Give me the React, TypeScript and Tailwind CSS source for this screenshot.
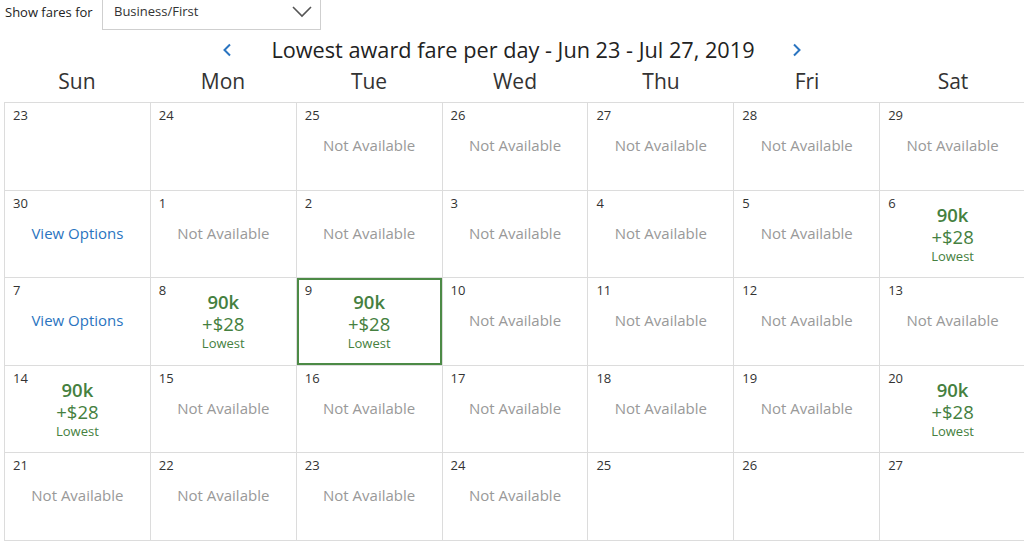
import React from "react";

type Cell = { d: number; kind: "empty" | "na" | "view" | "fare"; sel?: boolean };

const rows: Cell[][] = [
  [
    { d: 23, kind: "empty" },
    { d: 24, kind: "empty" },
    { d: 25, kind: "na" },
    { d: 26, kind: "na" },
    { d: 27, kind: "na" },
    { d: 28, kind: "na" },
    { d: 29, kind: "na" },
  ],
  [
    { d: 30, kind: "view" },
    { d: 1, kind: "na" },
    { d: 2, kind: "na" },
    { d: 3, kind: "na" },
    { d: 4, kind: "na" },
    { d: 5, kind: "na" },
    { d: 6, kind: "fare" },
  ],
  [
    { d: 7, kind: "view" },
    { d: 8, kind: "fare" },
    { d: 9, kind: "fare", sel: true },
    { d: 10, kind: "na" },
    { d: 11, kind: "na" },
    { d: 12, kind: "na" },
    { d: 13, kind: "na" },
  ],
  [
    { d: 14, kind: "fare" },
    { d: 15, kind: "na" },
    { d: 16, kind: "na" },
    { d: 17, kind: "na" },
    { d: 18, kind: "na" },
    { d: 19, kind: "na" },
    { d: 20, kind: "fare" },
  ],
  [
    { d: 21, kind: "na" },
    { d: 22, kind: "na" },
    { d: 23, kind: "na" },
    { d: 24, kind: "na" },
    { d: 25, kind: "empty" },
    { d: 26, kind: "empty" },
    { d: 27, kind: "empty" },
  ],
];

const days = ["Sun", "Mon", "Tue", "Wed", "Thu", "Fri", "Sat"];

function CellView({ c }: { c: Cell }) {
  return (
    <div className="relative h-[87.5px] border-r border-b border-[#dcdcdc] bg-white">
      {c.sel && <div className="absolute inset-0 border-2 border-[#4c8a46] pointer-events-none" />}
      <div className="absolute left-[8px] top-[3px] text-[13px] text-[#333]">{c.d}</div>
      {c.kind === "na" && (
        <div className="pt-[31px] text-center text-[15px] text-[#999]">Not Available</div>
      )}
      {c.kind === "view" && (
        <div className="pt-[31px] text-center text-[15px] text-[#2a74c0]">View Options</div>
      )}
      {c.kind === "fare" && (
        <div className="pt-[12px] flex flex-col items-center text-[#458040]">
          <div className="text-[18.5px] font-semibold leading-[23px]">90k</div>
          <div className="text-[18.5px] leading-[22px]">+$28</div>
          <div className="text-[13px] leading-[17px]">Lowest</div>
        </div>
      )}
    </div>
  );
}

export default function App() {
  return (
    <div
      className="w-[1024px] h-[542px] overflow-hidden bg-white text-[#333]"
      style={{ fontFamily: '"Open Sans", "Noto Sans", sans-serif' }}
    >
      <div className="flex items-start h-[30px]">
        <div className="pl-[5px] pt-[3px] text-[13px] text-[#222] w-[102px]">Show fares for</div>
        <div className="w-[219px] h-[30px] border border-[#cfcfcf] border-t-0 flex items-center justify-between pl-[11px] pr-[8px] pb-[5px]">
          <span className="text-[13px] text-[#333]">Business/First</span>
          <svg width="20" height="14" viewBox="0 0 20 14" fill="none">
            <path d="M1 2 L10 11 L19 2" stroke="#555" strokeWidth="1.6" />
          </svg>
        </div>
      </div>
      <div className="flex items-center justify-center h-[42px] pb-[2px]">
        <svg width="10" height="14" viewBox="0 0 10 14" fill="none" className="mr-[39px]">
          <path d="M8 1.5 L2.5 7 L8 12.5" stroke="#2a74c0" strokeWidth="2" />
        </svg>
        <div className="text-[21.7px] text-[#222]">Lowest award fare per day - Jun 23 - Jul 27, 2019</div>
        <svg width="10" height="14" viewBox="0 0 10 14" fill="none" className="ml-[37px]">
          <path d="M2 1.5 L7.5 7 L2 12.5" stroke="#2a74c0" strokeWidth="2" />
        </svg>
      </div>
      <div className="pl-[4px]">
        <div className="grid grid-cols-7 w-[1022px] h-[30px]">
          {days.map((d) => (
            <div key={d} className="text-center text-[21px] leading-[18px] text-[#333]">
              {d}
            </div>
          ))}
        </div>
        <div className="grid grid-cols-7 w-[1022px] border-l border-t border-[#dcdcdc]">
          {rows.flat().map((c, i) => (
            <CellView key={i} c={c} />
          ))}
        </div>
      </div>
    </div>
  );
}
